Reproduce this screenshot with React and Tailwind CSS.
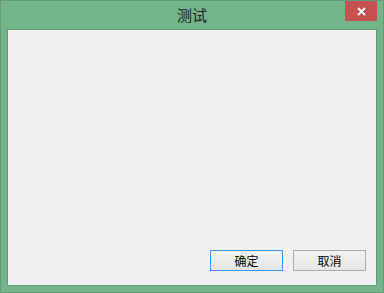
export default function App() {
  return (
    <div
      className="relative w-[384px] h-[293px] bg-[#74b48b] border border-[#5f9c77] flex flex-col"
      style={{ fontFamily: '"Noto Sans CJK SC", "Noto Sans", sans-serif' }}
    >
      {/* Title bar */}
      <div className="h-[28px] flex items-center justify-center">
        <span className="text-[15px] leading-none text-[#222222] -mt-[2px]">测试</span>
      </div>
      <button className="absolute top-0 right-[6px] w-[32px] h-[20px] bg-[#c75050] flex items-center justify-center">
        <svg width="9" height="9" viewBox="0 0 9 9">
          <path d="M1 1L8 8M8 1L1 8" stroke="#ffffff" strokeWidth="2" />
        </svg>
      </button>

      {/* Client area */}
      <div className="mx-[6px] mb-[6px] flex-1 border border-[#5f9c77] bg-[#f0f0f0] flex flex-col justify-end items-end pr-[10px] pb-[14px]">
        <div className="flex gap-[10px]">
          <button className="w-[73px] h-[21px] border border-[#3399ff] bg-gradient-to-b from-[#f2f2f2] to-[#e6e6e6] text-[12px] leading-none text-black">
            确定
          </button>
          <button className="w-[73px] h-[21px] border border-[#acacac] bg-gradient-to-b from-[#f2f2f2] to-[#e6e6e6] text-[12px] leading-none text-black">
            取消
          </button>
        </div>
      </div>
    </div>
  );
}
